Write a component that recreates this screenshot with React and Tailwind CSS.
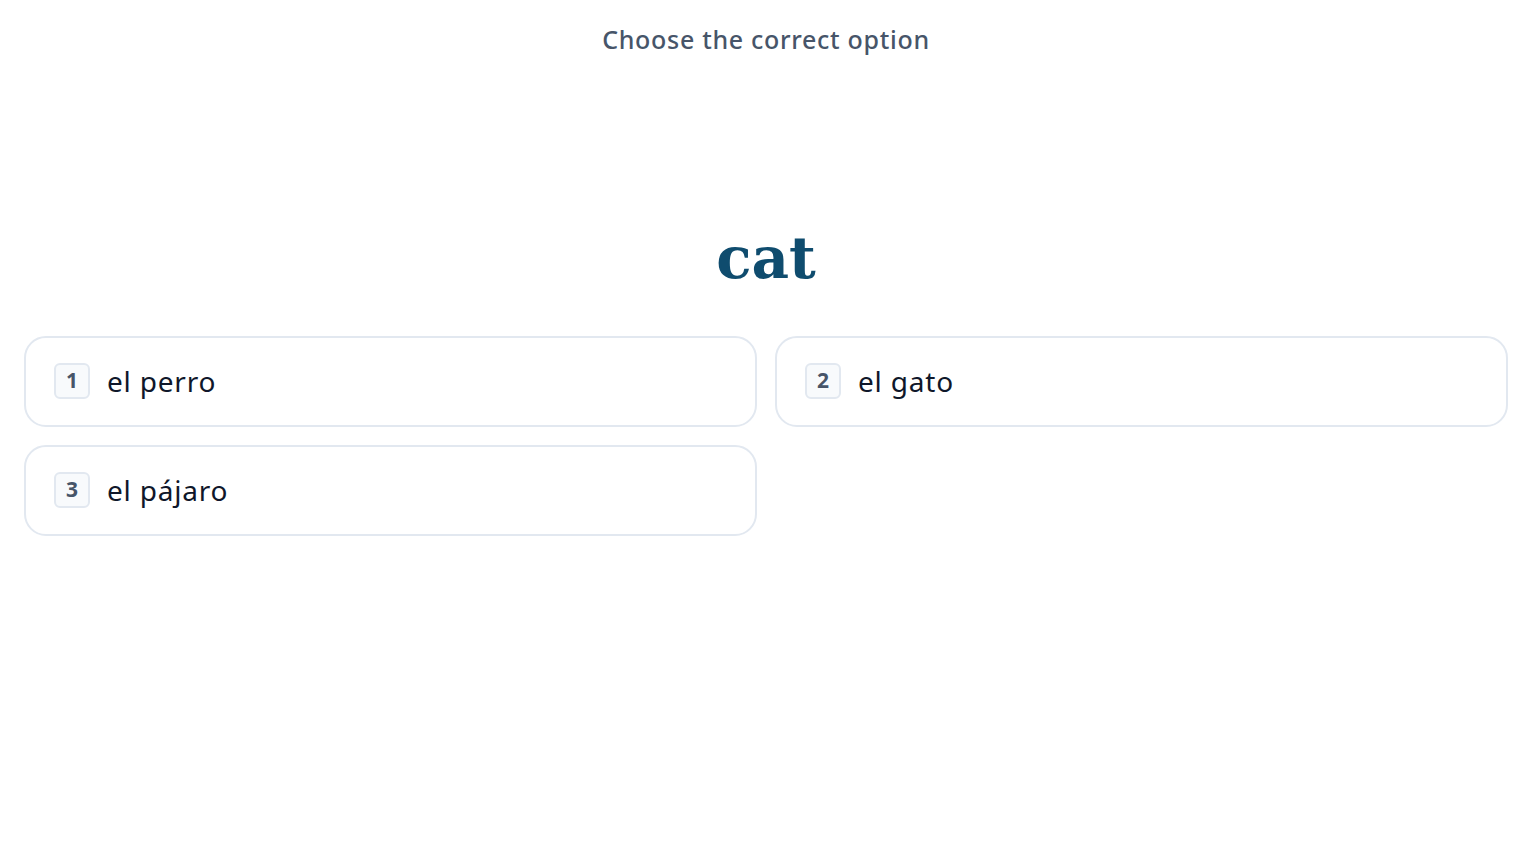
import React from 'react';

const options = [
    { key: 1, label: 'el perro' },
    { key: 2, label: 'el gato' },
    { key: 3, label: 'el pájaro' },
];

const App = () => {
    return (
        <div className="min-h-screen bg-white flex flex-col" style={{ fontFamily: '"Noto Sans", "Open Sans", sans-serif' }}>
            {/* Prompt */}
            <div className="pt-[21px] text-center text-[25px] leading-[36px] font-medium text-[#475569] tracking-[0.7px]">
                Choose the correct option
            </div>

            {/* Word */}
            <div className="mt-[161px] text-center">
                <h1
                    className="text-[58px] leading-[80px] font-bold text-[#0f4c6e]"
                    style={{ fontFamily: '"DejaVu Serif", "Liberation Serif", serif' }}
                >
                    cat
                </h1>
            </div>

            {/* Options */}
            <div className="mt-[38px] px-6 grid grid-cols-2 gap-[18px]">
                {options.map(opt => (
                    <button
                        key={opt.key}
                        className="h-[91px] flex items-center gap-[17px] px-[28px] pb-[2px] border-2 border-[#e2e8f0] rounded-[22px] bg-white text-left"
                    >
                        <span className="w-9 h-9 flex items-center justify-center rounded-md border-2 border-[#e2e8f0] bg-[#f8fafc] text-[21px] font-bold text-[#475569]">
                            {opt.key}
                        </span>
                        <span className="text-[28px] tracking-[0.8px] text-[#0f172a]">{opt.label}</span>
                    </button>
                ))}
            </div>
        </div>
    );
};

export default App;
